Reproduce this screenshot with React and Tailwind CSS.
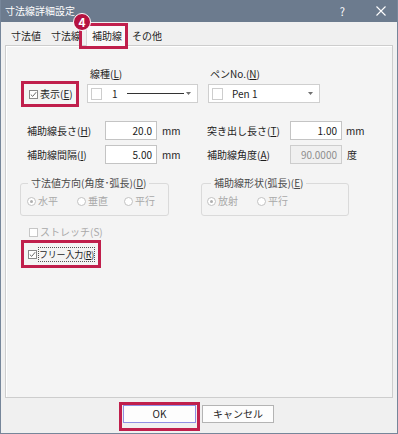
import React from "react";

const F = { fontFamily: '"Noto Sans CJK JP", "Noto Sans", sans-serif' };

function Check({ checked, disabled }) {
  return (
    <span
      className={`inline-flex items-center justify-center w-[9px] h-[9px] border bg-white shrink-0 ${
        disabled ? "border-[#c6c6c6]" : "border-[#8a8a8a]"
      }`}
    >
      {checked && (
        <svg width="7" height="7" viewBox="0 0 7 7">
          <path d="M0.8 3.6 L2.7 5.4 L6.2 1.2" fill="none" stroke="#6a6a6a" strokeWidth="1" />
        </svg>
      )}
    </span>
  );
}

function Radio({ checked, label }) {
  return (
    <div className="flex items-center gap-[2px] text-[#a9a9a9]">
      <span className="inline-flex items-center justify-center w-[9px] h-[9px] rounded-full border border-[#c2c2c2] bg-white">
        {checked && <span className="w-[3px] h-[3px] rounded-full bg-[#b0b0b0]" />}
      </span>
      <span>{label}</span>
    </div>
  );
}

function U({ children }) {
  return <span className="underline underline-offset-[1px]">{children}</span>;
}

function NumInput({ value, disabled }) {
  return (
    <div
      className={`w-[52px] h-[19px] border flex items-center justify-end pr-[4px] ${
        disabled ? "bg-[#f0f0f0] border-[#cdcdcd] text-[#8e8e8e]" : "bg-white border-[#c4c4c4] text-[#1a1a1a]"
      }`}
    >
      {value}
    </div>
  );
}

function Combo({ children }) {
  return (
    <div className="h-[19px] border border-[#cfcfcf] bg-white flex items-center pl-[3px] pr-[6px]">
      <span className="w-[11px] h-[12px] border border-[#cdcdcd] bg-white shrink-0" />
      {children}
      <svg width="5" height="3" viewBox="0 0 5 3" className="ml-auto">
        <path d="M0 0 L5 0 L2.5 3 Z" fill="#707070" />
      </svg>
    </div>
  );
}

export default function App() {
  return (
    <div
      style={F}
      className="w-[398px] h-[434px] bg-[#f0f0f0] text-[10px] leading-[14px] text-[#1e1e1e] whitespace-nowrap flex flex-col border-l border-r border-b border-[#76869a] relative overflow-hidden"
    >
      {/* title bar */}
      <div className="h-[22px] bg-[#6c7b8e] text-white flex items-center shrink-0">
        <span className="ml-[4px] text-[10px]">寸法線詳細設定</span>
        <span className="ml-auto mr-[31px] text-[11px]">?</span>
        <svg width="10" height="10" viewBox="0 0 10 10" className="mr-[11px]">
          <path d="M0.5 0.5 L9.5 9.5 M9.5 0.5 L0.5 9.5" stroke="white" strokeWidth="1.1" />
        </svg>
      </div>

      {/* tabs */}
      <div className="h-[23px] flex items-end pl-[5px] shrink-0 relative z-10">
        <div className="px-[5px] h-[19px] flex items-center">寸法値</div>
        <div className="px-[5px] h-[19px] flex items-center">寸法線</div>
        <div className="px-[5px] h-[21px] mb-[-1px] flex items-center bg-[#fafafa] border-l border-r border-t border-[#d6d6d6]">
          補助線
        </div>
        <div className="px-[4px] h-[19px] flex items-center">その他</div>
      </div>

      {/* highlight over tab + badge */}
      <div className="absolute left-[78px] top-[23px] w-[49px] h-[26px] border-[3px] border-[#c01f4c] z-20 pointer-events-none" />
      <div className="absolute left-[72px] top-[13px] w-[18px] h-[18px] rounded-full bg-[#b51240] border border-white text-white font-bold text-[12px] leading-none flex items-center justify-center z-30">
        4
      </div>

      {/* panel */}
      <div className="mx-[4px] h-[353px] border border-[#cdcdcd] bg-[#f4f4f4] shadow-[inset_1px_1px_0_#ffffff] flex flex-col shrink-0">
        {/* row 1 */}
        <div className="flex items-start mt-[20px]">
          <div className="ml-[15px] mt-[15px] w-[58px] h-[26px] border-[3px] border-[#c01f4c] flex items-center pl-[5px] gap-[2px]">
            <Check checked />
            <span>
              表示(<U>E</U>)
            </span>
          </div>
          <div className="ml-[8px] w-[111px] flex flex-col">
            <div className="h-[16px] pl-[3px] flex items-center">
              線種(<U>L</U>)
            </div>
            <div className="mt-[2px]">
              <Combo>
                <span className="ml-[10px]">1</span>
                <span className="ml-[9px] w-[57px] h-px bg-[#333]" />
              </Combo>
            </div>
          </div>
          <div className="ml-[10px] w-[112px] flex flex-col">
            <div className="h-[16px] pl-[2px] flex items-center">
              ペンNo.(<U>N</U>)
            </div>
            <div className="mt-[2px]">
              <Combo>
                <span className="ml-[9px]">Pen 1</span>
              </Combo>
            </div>
          </div>
        </div>

        {/* rows 2-3 */}
        <div className="flex flex-col gap-[5px] mt-[14px]">
          <div className="flex items-center">
            <div className="ml-[21px] w-[180px] flex items-center">
              <span className="w-[78px]">
                補助線長さ(<U>H</U>)
              </span>
              <NumInput value="20.0" />
              <span className="ml-[5px]">mm</span>
            </div>
            <span className="w-[83px]">
              突き出し長さ(<U>T</U>)
            </span>
            <NumInput value="1.00" />
            <span className="ml-[4px]">mm</span>
          </div>
          <div className="flex items-center">
            <div className="ml-[21px] w-[180px] flex items-center">
              <span className="w-[78px]">
                補助線間隔(<U>I</U>)
              </span>
              <NumInput value="5.00" />
              <span className="ml-[5px]">mm</span>
            </div>
            <span className="w-[83px]">
              補助線角度(<U>A</U>)
            </span>
            <NumInput value="90.0000" disabled />
            <span className="ml-[5px]">度</span>
          </div>
        </div>

        {/* group boxes */}
        <div className="flex mt-[12px]">
          <fieldset className="ml-[14px] w-[149px] h-[40px] border border-[#dadada] rounded-[3px] px-[7px]">
            <legend className="px-[3px] text-[#4a4a4a]">
              寸法値方向(角度･弧長)(<U>D</U>)
            </legend>
            <div className="flex items-center mt-[4px] -ml-[1px]">
              <div className="w-[50px]">
                <Radio checked label="水平" />
              </div>
              <div className="w-[47px]">
                <Radio label="垂直" />
              </div>
              <Radio label="平行" />
            </div>
          </fieldset>
          <fieldset className="ml-[32px] w-[148px] h-[40px] border border-[#dadada] rounded-[3px] px-[7px]">
            <legend className="ml-[2px] px-[3px] text-[#4a4a4a]">
              補助線形状(弧長)(<U>E</U>)
            </legend>
            <div className="flex items-center mt-[4px] -ml-[2px]">
              <div className="w-[50px]">
                <Radio checked label="放射" />
              </div>
              <Radio label="平行" />
            </div>
          </fieldset>
        </div>

        {/* stretch */}
        <div className="flex items-center ml-[23px] mt-[9px] gap-[2px] text-[#a9a9a9]">
          <Check disabled />
          <span>ストレッチ(S)</span>
        </div>

        {/* free input */}
        <div className="ml-[15px] mt-[1px] w-[80px] h-[28px] border-[3px] border-[#c01f4c] flex items-center pl-[4px] gap-[1px]">
          <Check checked />
          <span className="border border-dotted border-[#555] leading-[13px] text-[9px] tracking-[-0.2px]">
            フリー入力(<U>R</U>)
          </span>
        </div>
      </div>

      {/* footer */}
      <div className="flex items-start mt-[4px] ml-[118px]">
        <div className="w-[81px] h-[29px] border-[3px] border-[#c01f4c] pl-[1px] pt-0">
          <div className="w-[73px] h-[18px] border border-[#8f8fe3] bg-[#fdfdfd] flex items-center justify-center">
            OK
          </div>
        </div>
        <div className="ml-[2px] mt-[3px] w-[72px] h-[18px] border border-[#b4b4b4] bg-[#fdfdfd] flex items-center justify-center">
          キャンセル
        </div>
      </div>
    </div>
  );
}
